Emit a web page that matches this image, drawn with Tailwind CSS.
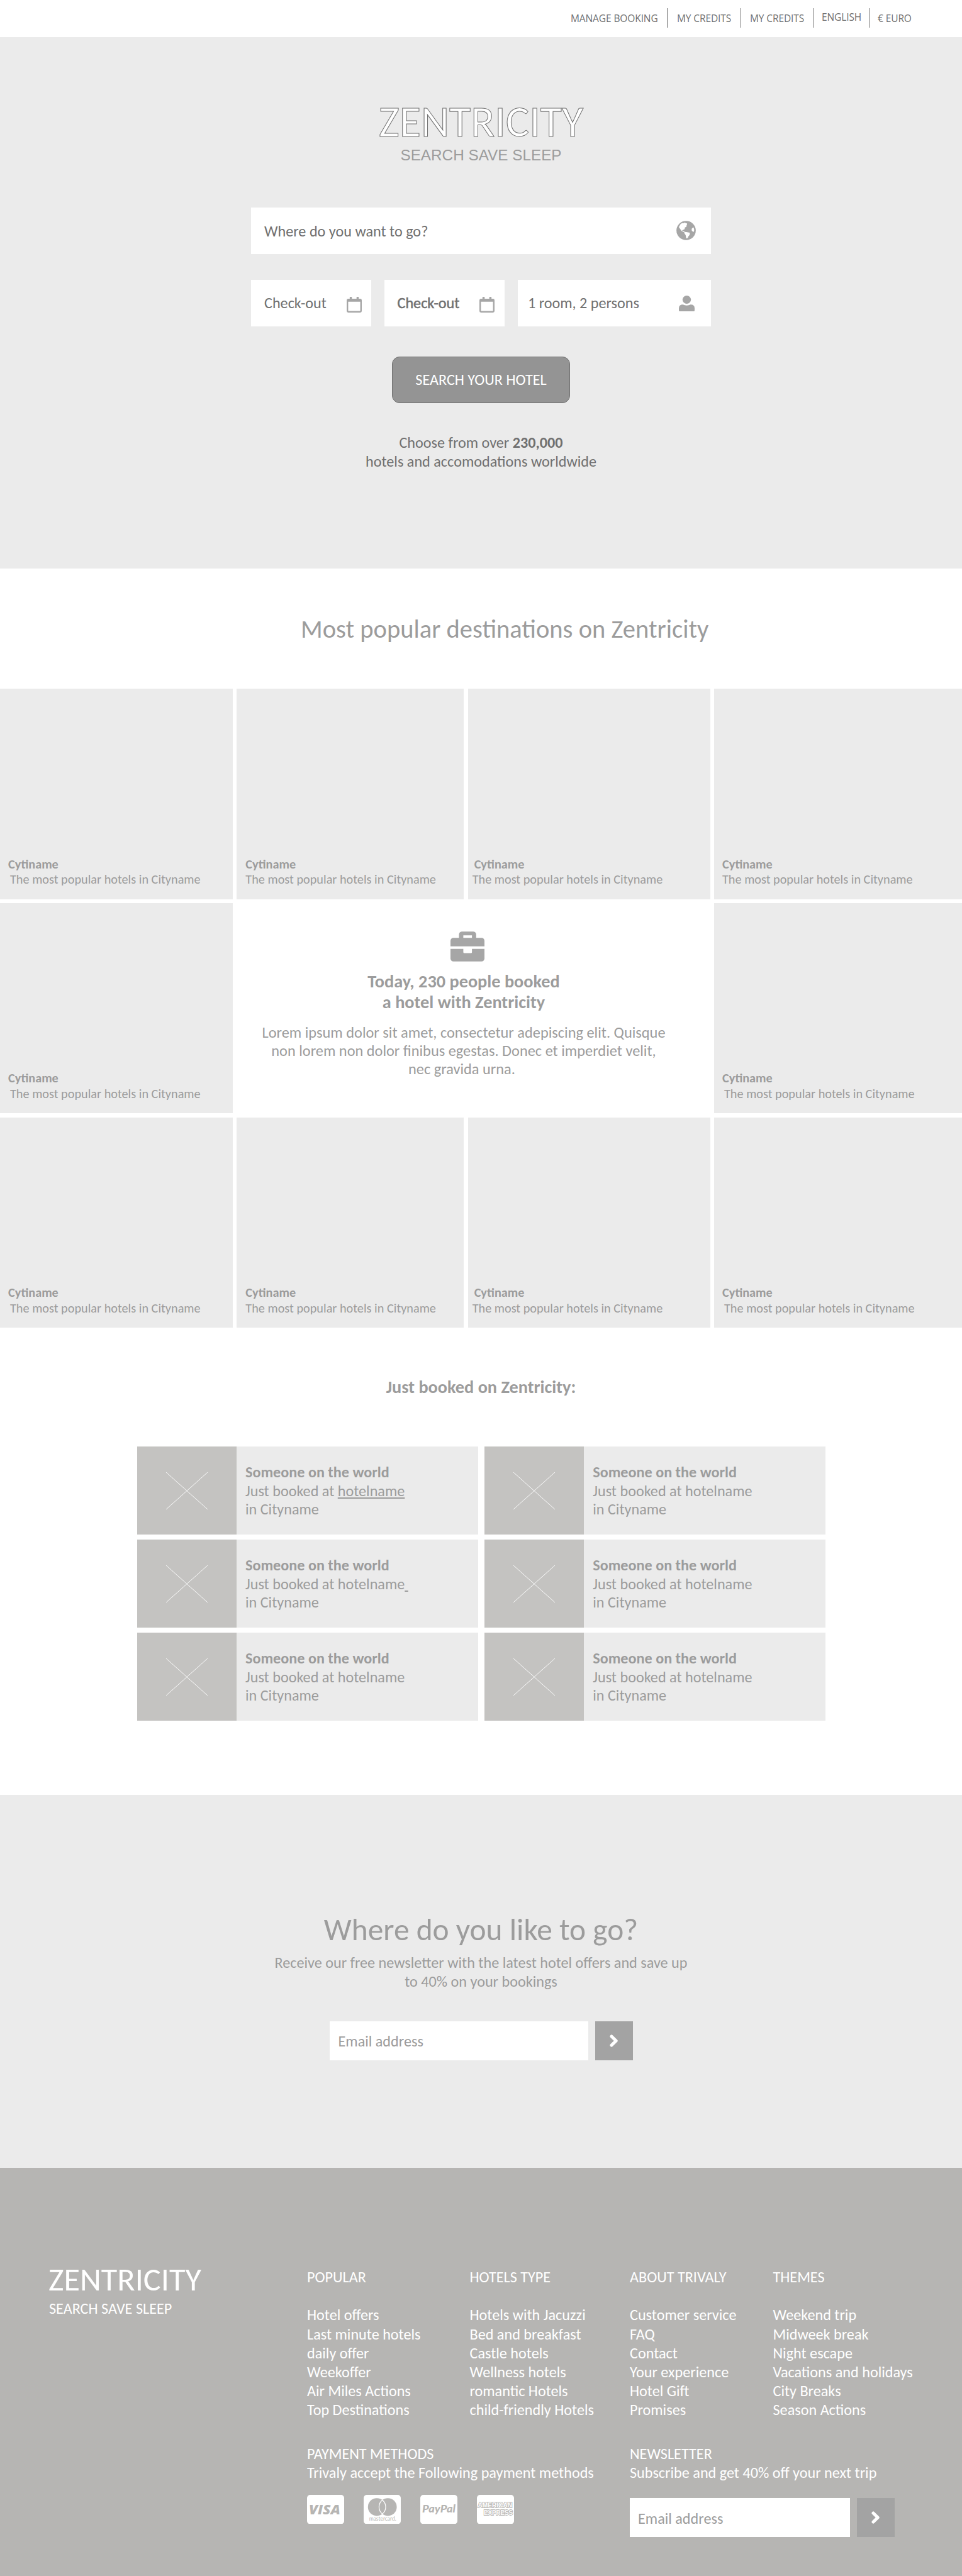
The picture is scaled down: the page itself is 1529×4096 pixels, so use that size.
<!DOCTYPE html>
<html lang="en">
<head>
<meta charset="utf-8">
<title>Zentricity</title>
<script src="https://cdn.jsdelivr.net/npm/@tailwindcss/browser@4"></script>
</head>
<body class="w-[1529px] h-[4096px] overflow-hidden bg-white font-[Carlito,Calibri,Lato,sans-serif] text-[24.200px] leading-[29.500px] text-[#9c9c9c] whitespace-nowrap">

<svg class="hidden">
  <symbol id="calendar" viewBox="0 0 30 31"><path fill-rule="evenodd" fill="#a6a6a6" d="M6 1a1 1 0 0 1 1-1h2.400a1 1 0 0 1 1 1v2.700h9.200V1a1 1 0 0 1 1-1h2.400a1 1 0 0 1 1 1v2.700H27a3 3 0 0 1 3 3V28a3 3 0 0 1-3 3H3a3 3 0 0 1-3-3V6.700a3 3 0 0 1 3-3h3zM3 9.700V27.500a.6.6 0 0 0 .6.6h22.800a.6.6 0 0 0 .6-.6V9.700z"/></symbol>
  <symbol id="chevron" viewBox="0 0 14 20"><path d="M3 3l7.200 7L3 17" fill="none" stroke="#fff" stroke-width="5" stroke-linejoin="round" stroke-linecap="round"/></symbol>
  <symbol id="placeholder" viewBox="0 0 66 59"><path d="M0 0L66 59M66 0L0 59" stroke="#fff" stroke-width=".9"/></symbol>
</svg>

<header class="h-[59px] flex items-start pt-[13px] pl-[907px] font-['Open_Sans',sans-serif] text-[15.500px] leading-5 tracking-[-0.100px] text-[#707070]">
  <a class="w-[154px] h-[31px] pt-[6px] border-r border-[#707070]">MANAGE BOOKING</a>
  <a class="w-[117px] h-[31px] pt-[6px] pl-[15px] border-r border-[#707070]">MY CREDITS</a>
  <a class="w-[116px] h-[31px] pt-[6px] pl-[14px] border-r border-[#707070]">MY CREDITS</a>
  <a class="w-[89px] h-[31px] pt-[4px] pl-[12px] border-r border-[#707070]">ENGLISH</a>
  <a class="h-[31px] pt-[6px] pl-[12px]">€ EURO</a>
</header>

<section class="h-[845px] bg-[#ebebeb] pt-[104px] flex flex-col items-center text-[#707070]">
  <h1 class="text-[70px] leading-[60px] text-white [-webkit-text-stroke:1px_#707070]">ZENTRICITY</h1>
  <p class="mt-[9px] font-['Liberation_Sans',sans-serif] text-[24.300px] leading-[30px] text-[#9c9c9c]">SEARCH SAVE SLEEP</p>
  <form class="mt-[67.500px] flex w-[731px] flex-col">
    <div class="flex h-[74px] items-center justify-between bg-white pl-[21px] pr-[24px]">
      <span class="pt-[2px]">Where do you want to go?</span>
      <svg class="size-[31px]" viewBox="0 0 39 39"><circle cx="19.500" cy="19.500" r="19.300" fill="#a6a6a6"/><path fill="#fff" d="M5 12.500L8.500 6.500Q12 4.300 14 5L17.500 3.500L19 5.500L21.500 5L21 9L19.500 10L20.500 12L17 13.500L16.500 17L14.500 17.500L13.500 19L11.500 18.500L12.500 20.500L15.500 20.500L16 22.300L20 22.500L27 24L26.500 28.500L24.500 30.500L22.800 34.300Q21 36 19.600 34.600L18.600 28.600L16.200 25.500L15.800 23L10.500 20.500L8 17ZM33 13.500L30.500 16.500L31 20L34.300 22.500L35.500 20V17L34.500 13.500Z"/></svg>
    </div>
    <div class="mt-[41.500px] flex justify-between">
      <div class="flex h-[74px] w-[190.500px] items-center justify-between bg-white pl-[21px] pr-[15px]"><span>Check-out</span><svg class="mt-[4px] h-[25px] w-[24px]"><use href="#calendar"/></svg></div>
      <div class="flex h-[74px] w-[190.500px] items-center justify-between bg-white pl-[20.500px] pr-[16px]"><span class="[-webkit-text-stroke:0.500px_#707070]">Check-out</span><svg class="mt-[4px] h-[25px] w-[24px]"><use href="#calendar"/></svg></div>
      <div class="flex h-[74px] w-[307px] items-center justify-between bg-white pl-[16px] pr-[26px]"><span>1 room, 2 persons</span><svg class="h-[25px] w-[25px]" viewBox="0 0 31 31" fill="#a6a6a6"><ellipse cx="15.500" cy="8" rx="8.300" ry="8"/><path d="M0 29V25Q0 17.700 8 17.700Q11 19.500 15.500 19.500T23 17.700Q31 17.700 31 25V29Q31 31 29 31H2Q0 31 0 29Z"/></svg></div>
    </div>
  </form>
  <button class="mt-[48px] h-[74px] w-[283px] rounded-[12px] border border-[#707070] bg-[#949494] text-white">SEARCH YOUR HOTEL</button>
  <p class="mt-[48px] text-center">Choose from over <b>230,000</b><br>hotels and accomodations worldwide</p>
</section>

<h2 class="h-[191px] pl-[478px] pt-[71px] text-[40.550px] leading-[50px]">Most popular destinations on Zentricity</h2>

<section class="grid h-[1016px] grid-cols-[370px_361px_385px_394px] grid-rows-[334.500px_334.500px_334.500px] gap-x-[6.333px] gap-y-[6.400px] text-[20.250px] leading-[24.500px]">
  <article class="flex flex-col justify-end bg-[#ebebeb] pb-[19px] pl-[13px]"><b>Cytiname</b><p class="pl-[3px]">The most popular hotels in Cityname</p></article>
  <article class="flex flex-col justify-end bg-[#ebebeb] pb-[19px] pl-[14px]"><b>Cytiname</b><p>The most popular hotels in Cityname</p></article>
  <article class="flex flex-col justify-end bg-[#ebebeb] pb-[19px] pl-[7px]"><b class="pl-[3px]">Cytiname</b><p>The most popular hotels in Cityname</p></article>
  <article class="flex flex-col justify-end bg-[#ebebeb] pb-[19px] pl-[13px]"><b>Cytiname</b><p>The most popular hotels in Cityname</p></article>
  <article class="flex flex-col justify-end bg-[#ebebeb] pb-[19px] pl-[13px]"><b>Cytiname</b><p class="pl-[3px]">The most popular hotels in Cityname</p></article>
  <div class="col-span-2 flex flex-col items-center pr-[31px] pt-[45px] text-center">
    <svg class="ml-[13px] h-[48px] w-[54px]" viewBox="0 0 68 60" fill="#a6a6a6"><path fill-rule="evenodd" d="M17 12.600V6a6 6 0 0 1 6-6h22.400a6 6 0 0 1 6 6v6.600H62a6 6 0 0 1 6 6v11H0v-11a6 6 0 0 1 6-6zM25.700 7.700v4.900H43V7.700z"/><path d="M0 34.600h25.700v6.700a2 2 0 0 0 2 2H41a2 2 0 0 0 2-2v-6.700h25V54a6 6 0 0 1-6 6H6a6 6 0 0 1-6-6z"/></svg>
    <h3 class="mt-[16.500px] text-[28.300px] font-bold leading-[32.700px]">Today, 230 people booked<br>a hotel with Zentricity</h3>
    <p class="mt-[17px] text-[24.350px] leading-[29px]">Lorem ipsum dolor sit amet, consectetur adepiscing elit. Quisque<br>non lorem non dolor finibus egestas. Donec et imperdiet velit,<br><span class="pr-[6px]">nec gravida urna.</span></p>
  </div>
  <article class="flex flex-col justify-end bg-[#ebebeb] pb-[19px] pl-[13px]"><b>Cytiname</b><p class="pl-[3px]">The most popular hotels in Cityname</p></article>
  <article class="flex flex-col justify-end bg-[#ebebeb] pb-[19px] pl-[13px]"><b>Cytiname</b><p class="pl-[3px]">The most popular hotels in Cityname</p></article>
  <article class="flex flex-col justify-end bg-[#ebebeb] pb-[19px] pl-[14px]"><b>Cytiname</b><p>The most popular hotels in Cityname</p></article>
  <article class="flex flex-col justify-end bg-[#ebebeb] pb-[19px] pl-[7px]"><b class="pl-[3px]">Cytiname</b><p>The most popular hotels in Cityname</p></article>
  <article class="flex flex-col justify-end bg-[#ebebeb] pb-[19px] pl-[13px]"><b>Cytiname</b><p class="pl-[3px]">The most popular hotels in Cityname</p></article>
</section>

<section class="h-[743px] pt-[78px]">
  <h2 class="text-center text-[28.300px] font-bold leading-[34px]">Just booked on Zentricity:</h2>
  <div class="mt-[77px] ml-[218px] grid w-[1094px] grid-cols-2 gap-x-[10.500px] gap-y-[8px]">
    <article class="flex h-[140px] bg-[#ebebeb]"><div class="flex w-[158px] items-center justify-center bg-[#c4c3c1]"><svg class="h-[59px] w-[66px]"><use href="#placeholder"/></svg></div><p class="pl-[14px] pt-[26px]"><b>Someone on the world</b><br>Just booked at <span class="underline">hotelname</span><br>in Cityname</p></article>
    <article class="flex h-[140px] bg-[#ebebeb]"><div class="flex w-[158px] items-center justify-center bg-[#c4c3c1]"><svg class="h-[59px] w-[66px]"><use href="#placeholder"/></svg></div><p class="pl-[14px] pt-[26px]"><b>Someone on the world</b><br>Just booked at hotelname<br>in Cityname</p></article>
    <article class="flex h-[140px] bg-[#ebebeb]"><div class="flex w-[158px] items-center justify-center bg-[#c4c3c1]"><svg class="h-[59px] w-[66px]"><use href="#placeholder"/></svg></div><p class="pl-[14px] pt-[26px]"><b>Someone on the world</b><br>Just booked at hotelname<span class="underline">&nbsp;</span><br>in Cityname</p></article>
    <article class="flex h-[140px] bg-[#ebebeb]"><div class="flex w-[158px] items-center justify-center bg-[#c4c3c1]"><svg class="h-[59px] w-[66px]"><use href="#placeholder"/></svg></div><p class="pl-[14px] pt-[26px]"><b>Someone on the world</b><br>Just booked at hotelname<br>in Cityname</p></article>
    <article class="flex h-[140px] bg-[#ebebeb]"><div class="flex w-[158px] items-center justify-center bg-[#c4c3c1]"><svg class="h-[59px] w-[66px]"><use href="#placeholder"/></svg></div><p class="pl-[14px] pt-[26px]"><b>Someone on the world</b><br>Just booked at hotelname<br>in Cityname</p></article>
    <article class="flex h-[140px] bg-[#ebebeb]"><div class="flex w-[158px] items-center justify-center bg-[#c4c3c1]"><svg class="h-[59px] w-[66px]"><use href="#placeholder"/></svg></div><p class="pl-[14px] pt-[26px]"><b>Someone on the world</b><br>Just booked at hotelname<br>in Cityname</p></article>
  </div>
</section>

<section class="flex h-[593px] flex-col items-center bg-[#ebebeb] pt-[184px] text-center">
  <h2 class="text-[49.400px] leading-[60px]">Where do you like to go?</h2>
  <p class="mt-[8px]">Receive our free newsletter with the latest hotel offers and save up<br>to 40% on your bookings</p>
  <form class="mt-[49px] flex gap-[11px]">
    <div class="flex h-[62px] w-[411px] items-center bg-white pl-[14px] pt-[2px]">Email address</div>
    <button class="flex h-[62px] w-[60px] items-center justify-center bg-[#a3a3a3]"><svg class="h-[20px] w-[14px]"><use href="#chevron"/></svg></button>
  </form>
</section>

<footer class="flex h-[649px] bg-[#b6b5b3] leading-[30.180px] text-white">
  <div class="w-[488px] pl-[77px] pt-[147px]">
    <div class="text-[52.300px] leading-[60px]">ZENTRICITY</div>
    <div class="mt-[2px] pl-px">SEARCH SAVE SLEEP</div>
  </div>
  <div class="pt-[159px]">
    <div class="grid grid-cols-[258.500px_254.500px_227.500px_300px]">
      <div><h4 class="mb-[30.200px]">POPULAR</h4>Hotel offers<br>Last minute hotels<br>daily offer<br>Weekoffer<br>Air Miles Actions<br>Top Destinations</div>
      <div><h4 class="mb-[30.200px]">HOTELS TYPE</h4>Hotels with Jacuzzi<br>Bed and breakfast<br>Castle hotels<br>Wellness hotels<br>romantic Hotels<br>child-friendly Hotels</div>
      <div><h4 class="mb-[30.200px]">ABOUT TRIVALY</h4>Customer service<br>FAQ<br>Contact<br>Your experience<br>Hotel Gift<br>Promises</div>
      <div><h4 class="mb-[30.200px]">THEMES</h4>Weekend trip<br>Midweek break<br>Night escape<br>Vacations and holidays<br>City Breaks<br>Season Actions</div>
    </div>
    <div class="mt-[39px] grid grid-cols-[513px_500px]">
      <div>
        <h4>PAYMENT METHODS</h4>
        <p>Trivaly accept the Following payment methods</p>
        <div class="mt-[20px] flex gap-[31px]">
          <svg class="h-[46.500px] w-[59px]" viewBox="0 0 59 46.500"><rect width="59" height="46.500" rx="5" fill="#fff"/><text x="3" y="30.700" textLength="50" lengthAdjust="spacingAndGlyphs" fill="#b6b5b3" font-family="Open Sans" font-weight="800" font-style="italic" font-size="21.500">VISA</text></svg>
          <svg class="h-[46.500px] w-[59px]" viewBox="0 0 59 46.500"><rect width="59" height="46.500" rx="5" fill="#fff"/><circle cx="20.900" cy="19.300" r="14.100" fill="#b6b5b3"/><circle cx="38.500" cy="19.300" r="14.100" fill="#b6b5b3"/><path d="M29.700 8.300a14.100 14.100 0 0 1 0 22a14.100 14.100 0 0 1 0-22z" fill="#b6b5b3" stroke="#fff" stroke-width="1.200"/><text x="8.700" y="41" textLength="43" lengthAdjust="spacingAndGlyphs" fill="#b6b5b3" font-family="Lato" font-size="8.500">mastercard.</text></svg>
          <svg class="h-[46.500px] w-[59px]" viewBox="0 0 59 46.500"><rect width="59" height="46.500" rx="5" fill="#fff"/><text x="3" y="28.300" textLength="53" lengthAdjust="spacingAndGlyphs" fill="#b6b5b3" font-family="Lato" font-weight="900" font-style="italic" font-size="17">PayPal</text></svg>
          <svg class="h-[46.500px] w-[59px]" viewBox="0 0 59 46.500"><rect width="59" height="46.500" rx="5" fill="#fff"/><g fill="#fff" stroke="#b6b5b3" stroke-width="1.800" paint-order="stroke" font-family="Liberation Sans" font-weight="700" font-size="10.500"><text x="1.500" y="19.500" textLength="54.500" lengthAdjust="spacingAndGlyphs">AMERICAN</text><text x="11" y="31.700" textLength="46" lengthAdjust="spacingAndGlyphs">EXPRESS</text></g></svg>
        </div>
      </div>
      <div>
        <h4>NEWSLETTER</h4>
        <p>Subscribe and get 40% off your next trip</p>
        <form class="mt-[25px] flex gap-[11px] text-[#9c9c9c]">
          <div class="flex h-[62px] w-[350px] items-center bg-white pl-[13px] pt-[4px]">Email address</div>
          <button class="flex h-[62px] w-[60px] items-center justify-center bg-[#a3a3a3]"><svg class="h-[20px] w-[14px]"><use href="#chevron"/></svg></button>
        </form>
      </div>
    </div>
  </div>
</footer>
</body>
</html>
